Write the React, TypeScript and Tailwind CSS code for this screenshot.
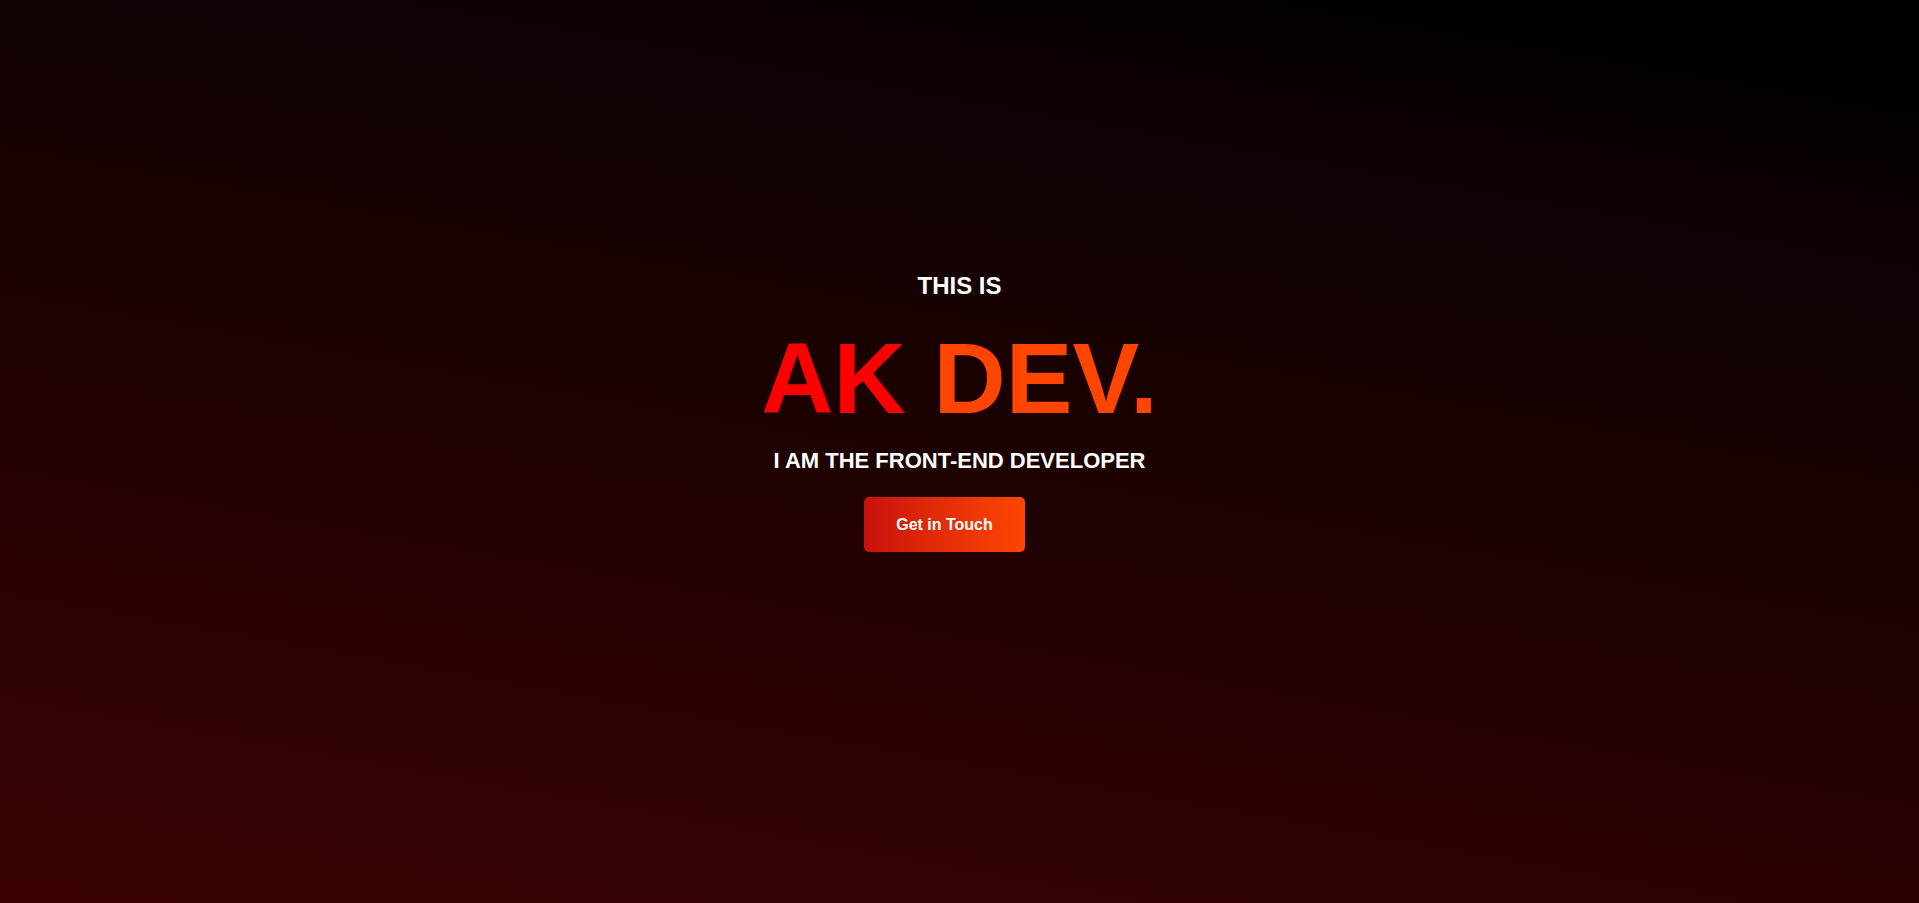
export default function App() {
  return (
    <main className="flex h-screen w-full flex-col items-center bg-[linear-gradient(10deg,#3a0303,#000000)] pt-[274px] font-['Liberation_Sans',Arial,sans-serif] text-white">
      <p className="text-[24px] font-bold leading-none">THIS IS</p>
      <h1 className="mt-[30px] text-[100px] font-bold leading-none">
        <span className="text-[#ff0000]">AK</span>{" "}
        <span className="text-[#ff4500]">DEV.</span>
      </h1>
      <p className="mt-[22px] text-[22px] font-bold leading-none">I AM THE FRONT-END DEVELOPER</p>
      <button
        type="button"
        className="mt-[25px] mr-[30px] flex h-[55px] w-[161px] items-center justify-center rounded-[5px] bg-linear-to-r from-[#c80f0c] to-[#ff4500] text-[16px] font-bold text-white"
      >
        Get in Touch
      </button>
    </main>
  );
}
